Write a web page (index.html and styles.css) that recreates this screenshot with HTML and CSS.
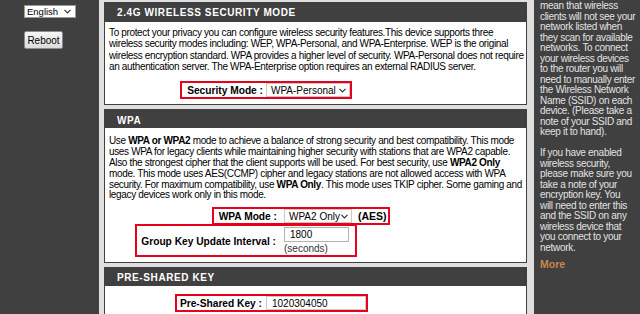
FILE: index.html
```html
<!DOCTYPE html>
<html>
<head>
    <title>Wireless Settings</title>
    <link rel="stylesheet" href="styles.css">
</head>
<body>
<div class="page">
    <div class="left-col">
        <div class="lang-select">English
            <svg class="chev" width="7" height="5" viewBox="0 0 7 5"><polyline points="0.5,0.8 3.5,3.8 6.5,0.8" fill="none" stroke="#333" stroke-width="1.2"/></svg>
        </div>
        <button class="reboot">Reboot</button>
    </div>

    <div class="main-col">
        <div class="panel panel-mode">
            <div class="panel-head">2.4G WIRELESS SECURITY MODE</div>
            <div class="panel-body">
                <p class="intro">
                    To protect your privacy you can configure wireless security features.This device supports three<br>
                    wireless security modes including: WEP, WPA-Personal, and WPA-Enterprise. WEP is the original<br>
                    wireless encryption standard. WPA provides a higher level of security. WPA-Personal does not require<br>
                    an authentication server. The WPA-Enterprise option requires an external RADIUS server.
                </p>
                <div class="form-row row-secmode">
                    <div class="mark">
                        <span class="label">Security Mode :</span>
                        <span class="select">WPA-Personal
                            <svg class="chev" width="7" height="5" viewBox="0 0 7 5"><polyline points="0.5,0.8 3.5,3.8 6.5,0.8" fill="none" stroke="#333" stroke-width="1.2"/></svg>
                        </span>
                    </div>
                </div>
            </div>
        </div>

        <div class="panel panel-wpa">
            <div class="panel-head">WPA</div>
            <div class="panel-body">
                <p class="intro">
                    Use <b>WPA or WPA2</b> mode to achieve a balance of strong security and best compatibility. This mode<br>
                    uses WPA for legacy clients while maintaining higher security with stations that are WPA2 capable.<br>
                    Also the strongest cipher that the client supports will be used. For best security, use <b>WPA2 Only</b><br>
                    mode. This mode uses AES(CCMP) cipher and legacy stations are not allowed access with WPA<br>
                    security. For maximum compatibility, use <b>WPA Only</b>. This mode uses TKIP cipher. Some gaming and<br>
                    legacy devices work only in this mode.
                </p>
                <div class="form-row row-wpamode">
                    <div class="mark">
                        <span class="label">WPA Mode :</span>
                        <span class="select">WPA2 Only
                            <svg class="chev" width="7" height="5" viewBox="0 0 7 5"><polyline points="0.5,0.8 3.5,3.8 6.5,0.8" fill="none" stroke="#333" stroke-width="1.2"/></svg>
                        </span>
                        <b class="suffix">(AES)</b>
                    </div>
                </div>
                <div class="form-row row-groupkey">
                    <div class="mark">
                        <span class="label">Group Key Update Interval :</span>
                        <div class="field">
                            <span class="input">1800</span>
                            <span class="hint">(seconds)</span>
                        </div>
                    </div>
                </div>
            </div>
        </div>

        <div class="panel panel-psk">
            <div class="panel-head">PRE-SHARED KEY</div>
            <div class="panel-body">
                <div class="form-row row-psk">
                    <div class="mark">
                        <span class="label">Pre-Shared Key :</span>
                        <span class="input">1020304050</span>
                    </div>
                </div>
            </div>
        </div>
    </div>

    <div class="right-col">
        <p class="help">
            mean that wireless<br>
            clients will not see your<br>
            network listed when<br>
            they scan for available<br>
            networks. To connect<br>
            your wireless devices<br>
            to the router you will<br>
            need to manually enter<br>
            the Wireless Network<br>
            Name (SSID) on each<br>
            device. (Please take a<br>
            note of your SSID and<br>
            keep it to hand).
        </p>
        <p class="help">
            If you have enabled<br>
            wireless security,<br>
            please make sure you<br>
            take a note of your<br>
            encryption key. You<br>
            will need to enter this<br>
            and the SSID on any<br>
            wireless device that<br>
            you connect to your<br>
            network.
        </p>
        <div class="more">More</div>
    </div>
</div>
</body>
</html>
```

FILE: styles.css
```css
body {
    margin: 0;
    font-family: "Liberation Sans", Arial, sans-serif;
    font-size: 10px;
    color: #000000;
    background-color: #404040;
    white-space: nowrap;
    overflow: hidden;
}

.page {
    display: flex;
    height: 314px;
    overflow: hidden;
}

/* left column */
.left-col {
    width: 99px;
    flex-shrink: 0;
    background-color: #404040;
    padding: 5px 0 0 24px;
    box-sizing: border-box;
}

.lang-select {
    display: flex;
    align-items: center;
    justify-content: space-between;
    width: 52px;
    height: 13px;
    box-sizing: border-box;
    padding: 0 4px 0 2px;
    background-color: #ffffff;
    border: 1px solid #9a9a9a;
    font-size: 9.5px;
}

.reboot {
    display: block;
    margin-top: 13px;
    width: 39px;
    height: 18px;
    padding: 0;
    font-family: inherit;
    font-size: 10px;
    color: #000000;
    background: linear-gradient(#f6f6f6, #dcdcdc);
    border: 1px solid #8c8c8c;
    border-radius: 2px;
}

/* main column */
.main-col {
    width: 435px;
    flex-shrink: 0;
    background-color: #dfdfdf;
    padding: 2px 7px 0 5px;
    box-sizing: border-box;
}

.panel {
    background-color: #ffffff;
    border: 1px solid #404040;
    margin-bottom: 4px;
}

.panel-head {
    height: 18px;
    line-height: 19px;
    padding-left: 12px;
    background-color: #404040;
    color: #ffffff;
    font-weight: bold;
    font-size: 10px;
    letter-spacing: 0.6px;
}

.panel-body {
    padding: 5px 4px 5px 4px;
}

.intro {
    margin: 0;
    line-height: 11.3px;
    letter-spacing: -0.35px;
}

.panel-mode .panel-head {
    height: 19px;
}

.panel-wpa .panel-head {
    line-height: 21px;
}

.panel-wpa .panel-body {
    padding-top: 7px;
}

.panel-wpa .intro {
    line-height: 10.85px;
    padding-top: 1px;
}

.panel-psk .panel-body {
    padding-top: 8px;
}

.form-row {
    display: flex;
}

.mark {
    display: flex;
    align-items: center;
    border: 2px solid #e8001c;
}

.label {
    font-weight: bold;
    font-size: 10.2px;
    text-align: right;
    box-sizing: border-box;
}

.select {
    display: flex;
    align-items: center;
    justify-content: space-between;
    height: 14px;
    box-sizing: border-box;
    padding: 0 3px 0 4px;
    border: 1px solid #c8c8c8;
    background-color: #ffffff;
}

.input {
    display: block;
    height: 15px;
    line-height: 13px;
    box-sizing: border-box;
    padding-left: 5px;
    border: 1px solid #b4b4b4;
    background-color: #ffffff;
}

/* security mode */
.row-secmode {
    margin: 9px 0 0 71px;
}

.row-secmode .mark {
    height: 18px;
    box-sizing: border-box;
}

.row-secmode .label {
    width: 84px;
    padding-right: 3px;
}

.row-secmode .select {
    width: 84px;
}

/* wpa mode */
.row-wpamode {
    margin: 6px 0 0 103px;
}

.row-wpamode .mark {
    height: 18px;
    box-sizing: border-box;
}

.row-wpamode .label {
    width: 70px;
    padding-right: 7px;
}

.row-wpamode .select {
    width: 68px;
}

.suffix {
    margin: 0 1px 0 6px;
    font-size: 10.5px;
}

/* group key */
.row-groupkey {
    margin: -1px 0 0 26px;
}

.row-groupkey .mark {
    align-items: flex-start;
    height: 33px;
    box-sizing: border-box;
    padding-right: 6px;
}

.row-groupkey .label {
    width: 147px;
    padding: 10px 8px 0 0;
}

.field {
    padding-top: 1px;
}

.row-groupkey .input {
    width: 65px;
}

.hint {
    display: block;
    margin-top: 1px;
    color: #333333;
}

/* pre-shared key */
.row-psk {
    margin-left: 66px;
}

.row-psk .mark {
    height: 18px;
    box-sizing: border-box;
}

.row-psk .label {
    width: 89px;
    padding-right: 4px;
}

.row-psk .input {
    width: 100px;
    height: 14px;
    border-color: #c8c8c8;
}

/* right column */
.right-col {
    flex: 1;
    background-color: #404040;
    padding: 0 0 0 6px;
    color: #e2e2e2;
}

.help {
    margin: 1px 0 0 0;
    line-height: 10.5px;
    letter-spacing: -0.3px;
}

.help + .help {
    margin-top: 10.5px;
}

.more {
    margin-top: 5px;
    color: #c8874e;
    font-weight: bold;
    font-size: 10.5px;
}
```
